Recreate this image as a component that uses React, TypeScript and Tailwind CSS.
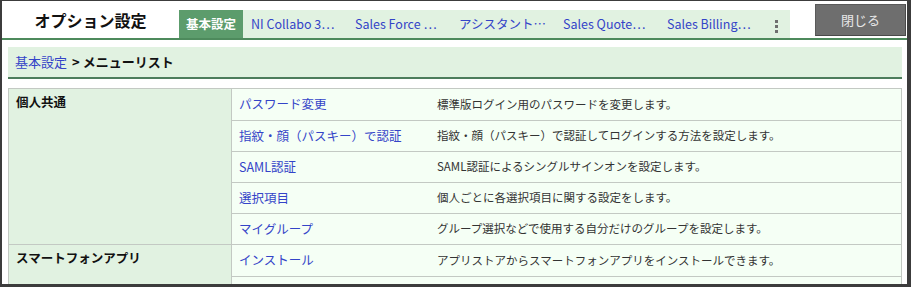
import React from "react";

const tabs = [
  "NI Collabo 3…",
  "Sales Force …",
  "アシスタント…",
  "Sales Quote…",
  "Sales Billing…",
];

type Row = { link: string; desc: string };
type Group = { title: string; rows: Row[] };

const groups: Group[] = [
  {
    title: "個人共通",
    rows: [
      { link: "パスワード変更", desc: "標準版ログイン用のパスワードを変更します。" },
      {
        link: "指紋・顔（パスキー）で認証",
        desc: "指紋・顔（パスキー）で認証してログインする方法を設定します。",
      },
      { link: "SAML認証", desc: "SAML認証によるシングルサインオンを設定します。" },
      { link: "選択項目", desc: "個人ごとに各選択項目に関する設定をします。" },
      {
        link: "マイグループ",
        desc: "グループ選択などで使用する自分だけのグループを設定します。",
      },
    ],
  },
  {
    title: "スマートフォンアプリ",
    rows: [
      {
        link: "インストール",
        desc: "アプリストアからスマートフォンアプリをインストールできます。",
      },
      { link: "ログイン設定", desc: "スマートフォンアプリのログイン方法を設定します。" },
    ],
  },
];

export default function App() {
  return (
    <div
      className="h-[287px] w-[911px] overflow-hidden bg-[#3c3c3c] pl-[2px] pr-[4px] pt-px"
      style={{ fontFamily: '"Noto Sans CJK JP", "Noto Sans", sans-serif' }}
    >
      <div className="h-[283px] overflow-hidden bg-white">
        {/* header */}
        <div className="flex h-[39px] items-end border-b-2 border-[#4d8a5c]">
          <div className="flex h-full w-[177px] items-center justify-center text-[16px] font-bold text-[#111]">
            オプション設定
          </div>
          <div className="flex h-[28px] bg-[#e1f2e1]">
            <div className="flex w-[64px] items-center justify-center bg-[#5c9c6c] text-[12.5px] font-bold text-white">
              基本設定
            </div>
            {tabs.map((t) => (
              <div
                key={t}
                className="flex w-[104px] items-center whitespace-nowrap px-[8px] text-[12.5px] text-[#3444c8]"
              >
                {t}
              </div>
            ))}
            <div className="flex w-[27px] flex-col items-center justify-center gap-[2px] pt-[4px]">
              <span className="h-[3px] w-[3px] bg-[#6f6f6f]" />
              <span className="h-[3px] w-[3px] bg-[#6f6f6f]" />
              <span className="h-[3px] w-[3px] bg-[#6f6f6f]" />
            </div>
          </div>
          <button className="ml-auto mr-[1px] mt-[3px] flex h-[32px] w-[91px] items-center justify-center self-start border border-[#5a5a5a] border-b-[#4a4a4a] border-r-[#4a4a4a] bg-[#6e6e6e] text-[13px] text-[#e8e8e8]">
            閉じる
          </button>
        </div>

        {/* breadcrumb */}
        <div className="ml-[6px] mr-[5px] mt-[7px] flex h-[32px] items-center border-b-2 border-[#4d7d5c] bg-[#e1f2e1] pl-[7px] text-[13px]">
          <span className="text-[#3444c8]">基本設定</span>
          <span className="ml-[5px] font-bold text-[#111]">&gt; メニューリスト</span>
        </div>

        {/* menu table */}
        <div className="ml-[6px] mr-[5px] mt-[9px] border border-[#c3c9c3]">
          {groups.map((g, gi) => (
            <div
              key={g.title}
              className={`flex ${gi > 0 ? "border-t border-[#c3c9c3]" : ""}`}
            >
              <div className="w-[223px] shrink-0 border-r border-[#c3c9c3] bg-[#e1f2e1] px-[7px] pt-[4px] text-[12.5px] font-bold text-[#111]">
                {g.title}
              </div>
              <div className="flex-1 bg-[#f5fff5]">
                {g.rows.map((r, ri) => (
                  <div
                    key={r.link}
                    className={`flex items-center ${
                      ri > 0 ? "h-[31px] border-t border-[#c3c9c3]" : "h-[31px]"
                    }`}
                  >
                    <div className="w-[198px] shrink-0 px-[7px] text-[12.5px] text-[#3444c8]">
                      {r.link}
                    </div>
                    <div className="px-[7px] text-[11.5px] text-[#333]">{r.desc}</div>
                  </div>
                ))}
              </div>
            </div>
          ))}
        </div>
      </div>
    </div>
  );
}
